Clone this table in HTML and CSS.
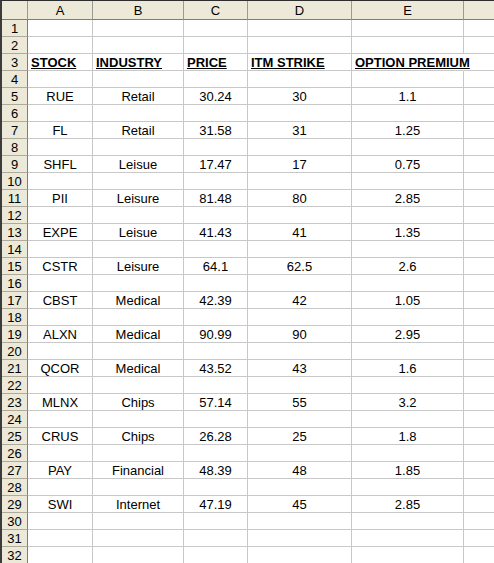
FILE: index.html
```html
<!DOCTYPE html>
<html>
<head>
<meta charset="utf-8">
<link rel="stylesheet" href="styles.css">
</head>
<body>
<table class="sheet">
<colgroup>
<col class="c-rh"><col class="c-a"><col class="c-b"><col class="c-c"><col class="c-d"><col class="c-e"><col class="c-f">
</colgroup>
<tr class="colhead"><th class="corner"></th><th>A</th><th>B</th><th>C</th><th>D</th><th>E</th><th class="last"></th></tr>
<tr><th class="rh">1</th><td></td><td></td><td></td><td></td><td></td><td></td></tr>
<tr><th class="rh">2</th><td></td><td></td><td></td><td></td><td></td><td></td></tr>
<tr><th class="rh">3</th><td class="h">STOCK</td><td class="h">INDUSTRY</td><td class="h">PRICE</td><td class="h">ITM STRIKE</td><td class="h over">OPTION PREMIUM</td><td></td></tr>
<tr><th class="rh">4</th><td></td><td></td><td></td><td></td><td></td><td></td></tr>
<tr><th class="rh">5</th><td>RUE</td><td>Retail</td><td>30.24</td><td>30</td><td>1.1</td><td></td></tr>
<tr><th class="rh">6</th><td></td><td></td><td></td><td></td><td></td><td></td></tr>
<tr><th class="rh">7</th><td>FL</td><td>Retail</td><td>31.58</td><td>31</td><td>1.25</td><td></td></tr>
<tr><th class="rh">8</th><td></td><td></td><td></td><td></td><td></td><td></td></tr>
<tr><th class="rh">9</th><td>SHFL</td><td>Leisue</td><td>17.47</td><td>17</td><td>0.75</td><td></td></tr>
<tr><th class="rh">10</th><td></td><td></td><td></td><td></td><td></td><td></td></tr>
<tr><th class="rh">11</th><td>PII</td><td>Leisure</td><td>81.48</td><td>80</td><td>2.85</td><td></td></tr>
<tr><th class="rh">12</th><td></td><td></td><td></td><td></td><td></td><td></td></tr>
<tr><th class="rh">13</th><td>EXPE</td><td>Leisue</td><td>41.43</td><td>41</td><td>1.35</td><td></td></tr>
<tr><th class="rh">14</th><td></td><td></td><td></td><td></td><td></td><td></td></tr>
<tr><th class="rh">15</th><td>CSTR</td><td>Leisure</td><td>64.1</td><td>62.5</td><td>2.6</td><td></td></tr>
<tr><th class="rh">16</th><td></td><td></td><td></td><td></td><td></td><td></td></tr>
<tr><th class="rh">17</th><td>CBST</td><td>Medical</td><td>42.39</td><td>42</td><td>1.05</td><td></td></tr>
<tr><th class="rh">18</th><td></td><td></td><td></td><td></td><td></td><td></td></tr>
<tr><th class="rh">19</th><td>ALXN</td><td>Medical</td><td>90.99</td><td>90</td><td>2.95</td><td></td></tr>
<tr><th class="rh">20</th><td></td><td></td><td></td><td></td><td></td><td></td></tr>
<tr><th class="rh">21</th><td>QCOR</td><td>Medical</td><td>43.52</td><td>43</td><td>1.6</td><td></td></tr>
<tr><th class="rh">22</th><td></td><td></td><td></td><td></td><td></td><td></td></tr>
<tr><th class="rh">23</th><td>MLNX</td><td>Chips</td><td>57.14</td><td>55</td><td>3.2</td><td></td></tr>
<tr><th class="rh">24</th><td></td><td></td><td></td><td></td><td></td><td></td></tr>
<tr><th class="rh">25</th><td>CRUS</td><td>Chips</td><td>26.28</td><td>25</td><td>1.8</td><td></td></tr>
<tr><th class="rh">26</th><td></td><td></td><td></td><td></td><td></td><td></td></tr>
<tr><th class="rh">27</th><td>PAY</td><td>Financial</td><td>48.39</td><td>48</td><td>1.85</td><td></td></tr>
<tr><th class="rh">28</th><td></td><td></td><td></td><td></td><td></td><td></td></tr>
<tr><th class="rh">29</th><td>SWI</td><td>Internet</td><td>47.19</td><td>45</td><td>2.85</td><td></td></tr>
<tr><th class="rh">30</th><td></td><td></td><td></td><td></td><td></td><td></td></tr>
<tr><th class="rh">31</th><td></td><td></td><td></td><td></td><td></td><td></td></tr>
<tr><th class="rh">32</th><td></td><td></td><td></td><td></td><td></td><td></td></tr>
</table>
</body>
</html>
```
FILE: styles.css
```css
html, body {
  margin: 0;
  padding: 0;
  overflow: hidden;
  background: #ffffff;
}

.sheet {
  border-collapse: separate;
  border-spacing: 0;
  table-layout: fixed;
  width: 502px;
  border-top: 1px solid #2e2e2e;
  border-left: 2px solid #3c3c3c;
  font-family: "Liberation Sans", Arial, sans-serif;
  font-size: 13px;
  color: #000;
}

.c-rh { width: 26px; }
.c-a { width: 65px; }
.c-b { width: 91px; }
.c-c { width: 64px; }
.c-d { width: 104px; }
.c-e { width: 112px; }
.c-f { width: 38px; }

th, td {
  box-sizing: border-box;
  padding: 0 2px;
  white-space: nowrap;
  overflow: visible;
  text-align: center;
  vertical-align: bottom;
  line-height: 15px;
  font-weight: normal;
}

td {
  height: 17px;
  border-right: 1px solid #c8c8c8;
  border-bottom: 1px solid #c8c8c8;
}

.colhead th {
  height: 19px;
  background: #ece9d8;
  border-right: 1px solid #9c9a8f;
  border-bottom: 1px solid #7f7d73;
  line-height: 17px;
  vertical-align: middle;
}

th.rh {
  height: 17px;
  background: #ece9d8;
  border-right: 1px solid #7f7d73;
  border-bottom: 1px solid #aeab9c;
  padding: 0;
}

td.h {
  font-weight: bold;
  text-decoration: underline;
  text-align: left;
  padding-left: 3px;
}

td.over {
  border-right-color: transparent;
}
```
